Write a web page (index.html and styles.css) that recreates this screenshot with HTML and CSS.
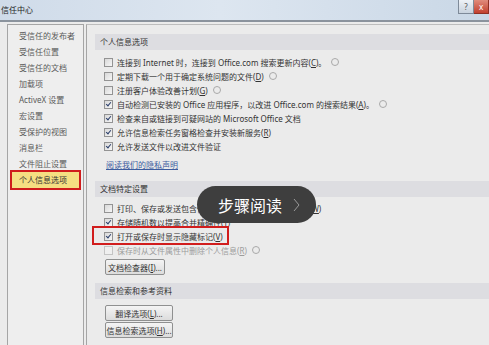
FILE: index.html
```html
<!DOCTYPE html>
<html lang="zh-CN">
<head>
    <meta charset="UTF-8">
    <title>信任中心</title>
    <link rel="stylesheet" href="styles.css">
</head>
<body>
    <div class="titlebar">
        <span class="title">信任中心</span>
        <div class="controls">
            <span class="btn-help">?</span>
            <span class="btn-close">x</span>
        </div>
    </div>

    <div class="window">
        <ul class="nav">
            <li>受信任的发布者</li>
            <li>受信任位置</li>
            <li>受信任的文档</li>
            <li>加载项</li>
            <li>ActiveX 设置</li>
            <li>宏设置</li>
            <li>受保护的视图</li>
            <li>消息栏</li>
            <li>文件阻止设置</li>
            <li class="active">个人信息选项</li>
        </ul>

        <div class="main">
            <div class="band">个人信息选项</div>
            <div class="opts first">
                <div class="opt"><span class="cb"></span><span class="lbl">连接到 Internet 时，连接到 Office.com 搜索更新内容(<u>C</u>)。</span><span class="info"></span></div>
                <div class="opt"><span class="cb"></span><span class="lbl">定期下载一个用于确定系统问题的文件(<u>D</u>)</span><span class="info"></span></div>
                <div class="opt"><span class="cb"></span><span class="lbl">注册客户体验改善计划(<u>G</u>)</span><span class="info"></span></div>
                <div class="opt"><span class="cb on"></span><span class="lbl">自动检测已安装的 Office 应用程序，以改进 Office.com 的搜索结果(<u>A</u>)。</span><span class="info"></span></div>
                <div class="opt"><span class="cb on"></span><span class="lbl">检查来自或链接到可疑网站的 Microsoft Office 文档</span></div>
                <div class="opt"><span class="cb on"></span><span class="lbl">允许信息检索任务窗格检查并安装新服务(<u>R</u>)</span></div>
                <div class="opt"><span class="cb on"></span><span class="lbl">允许发送文件以改进文件验证</span></div>
            </div>
            <a class="privacy" href="#">阅读我们的隐私声明</a>

            <div class="band second">文档特定设置</div>
            <div class="opts">
                <div class="opt"><span class="cb"></span><span class="lbl">打印、保存或发送包含修订或批注的文件之前发出警告(<u>W</u>)</span></div>
                <div class="opt"><span class="cb on"></span><span class="lbl">存储随机数以提高合并精确性(<u>T</u>)</span></div>
                <div class="opt marked"><span class="cb on"></span><span class="lbl">打开或保存时显示隐藏标记(<u>V</u>)</span></div>
                <div class="opt disabled"><span class="cb"></span><span class="lbl">保存时从文件属性中删除个人信息(<u>R</u>)</span><span class="info"></span></div>
            </div>
            <button class="btn inspect">文档检查器(<u>I</u>)...</button>

            <div class="band third">信息检索和参考资料</div>
            <button class="btn wide first-btn">翻译选项(<u>L</u>)...</button>
            <button class="btn wide">信息检索选项(<u>H</u>)...</button>
        </div>
    </div>

    <div class="pill">
        <span class="pill-text">步骤阅读</span>
        <svg class="chev" width="7" height="14" viewBox="0 0 7 14">
            <polyline points="1,1 6,7 1,13" fill="none" stroke="#9a9a9a" stroke-width="1"/>
        </svg>
    </div>
</body>
</html>
```

FILE: styles.css
```css
/* Page */
body {
    margin: 0;
    width: 489px;
    height: 345px;
    overflow: hidden;
    background: #ebebeb;
    font-family: "Noto Sans", "Noto Sans CJK SC", sans-serif;
    font-size: 8px;
    color: #333;
    position: relative;
}

/* Title bar */
.titlebar {
    height: 20px;
    display: flex;
    align-items: flex-start;
    background: linear-gradient(to right, #cfdbe9, #dde6f0 45%, #c9d7e6);
    border-bottom: 2px solid #8b939d;
}

.title {
    padding: 4px 0 0 1px;
    font-size: 8px;
    line-height: 12px;
    color: #1e1e1e;
}

.controls {
    margin-left: auto;
    display: flex;
}

.btn-help,
.btn-close {
    height: 14px;
    line-height: 13px;
    text-align: center;
    font-size: 8px;
    box-sizing: border-box;
}

.btn-help {
    width: 16px;
    background: linear-gradient(#eef2f7, #c8d2de);
    border: 1px solid #7e8a99;
    border-top: none;
    color: #555;
}

.btn-close {
    width: 15px;
    background: linear-gradient(#e08b7c, #c2402f);
    border: 1px solid #8e3024;
    border-top: none;
    border-left: none;
    color: #fff;
}

/* Body of the dialog */
.window {
    display: flex;
    height: 323px;
    padding: 2px 0 0 7px;
    box-sizing: border-box;
}

/* Left navigation */
.nav {
    list-style: none;
    margin: 0;
    padding: 3px 0 0 0;
    width: 77px;
    box-sizing: border-box;
    border: 1px solid #a5a5a5;
    border-bottom: none;
    background: #eeeeee;
    color: #5a5a5a;
}

.nav li {
    height: 16px;
    line-height: 16px;
    padding-left: 11px;
}

.nav li.active {
    margin: -2px 2px 0 2px;
    height: 20px;
    line-height: 16px;
    padding-left: 7px;
    box-sizing: border-box;
    border: 2px solid #cf1c1c;
    background: #f5df82;
    color: #333;
}

/* Right panel */
.main {
    flex: 1;
    margin-left: 2px;
    padding: 9px 0 0 8px;
    border-left: 1px solid #a5a5a5;
    border-top: 1px solid #bdbdbd;
}

.band {
    height: 16px;
    line-height: 16px;
    padding-left: 5px;
    background: #dddde1;
    color: #333;
}

.band.second {
    margin-top: 9px;
}

.band.third {
    margin-top: 8px;
}

.opts {
    margin-top: 4px;
    padding-left: 9px;
}

.opts.first {
    margin-top: 5px;
}

.opt {
    height: 14px;
    display: flex;
    align-items: center;
    white-space: nowrap;
    width: fit-content;
}

.lbl {
    margin-left: 4px;
}

.opt.disabled {
    color: #9c9c9c;
}

.opt.marked {
    position: relative;
}

.opt.marked::after {
    content: "";
    position: absolute;
    left: -12px;
    right: -6px;
    top: -3px;
    bottom: -2px;
    border: 2px solid #d11d1d;
}

/* Checkbox */
.cb {
    width: 9px;
    height: 9px;
    box-sizing: border-box;
    border: 1px solid #939393;
    background: linear-gradient(135deg, #d8d8d8, #f6f6f6);
    flex-shrink: 0;
    position: relative;
}

.cb.on::after {
    content: "";
    position: absolute;
    left: 2px;
    top: 0px;
    width: 2px;
    height: 4px;
    border-right: 1.5px solid #2b3f6b;
    border-bottom: 1.5px solid #2b3f6b;
    transform: rotate(40deg);
}

.disabled .cb {
    border-color: #c4c4c4;
    background: #efefef;
}

.info {
    width: 6px;
    height: 6px;
    border: 1px solid #a9a9a9;
    border-radius: 50%;
    margin-left: 5px;
    flex-shrink: 0;
}

.privacy {
    display: block;
    margin: 5px 0 0 11px;
    height: 14px;
    line-height: 14px;
    color: #3d5c9e;
    text-decoration: underline;
}

/* Buttons */
.btn {
    display: block;
    height: 16px;
    margin: 2px 0 0 10px;
    padding: 0;
    font-family: inherit;
    font-size: 8px;
    color: #333;
    border: 1px solid #8f9090;
    border-radius: 2px;
    background: linear-gradient(#f4f4f4, #dcdcdc);
}

.btn.inspect {
    width: 60px;
}

.btn.wide {
    width: 68px;
    margin-top: 1px;
}

.btn.first-btn {
    margin-top: 6px;
}

/* Step reading overlay */
.pill {
    position: absolute;
    left: 197px;
    top: 186px;
    width: 119px;
    height: 37px;
    border-radius: 19px;
    background: #3e3e3e;
    display: flex;
    align-items: center;
    padding-left: 21px;
    box-sizing: border-box;
}

.pill-text {
    font-size: 16px;
    color: #fff;
}

.chev {
    margin-left: 11px;
}
```
